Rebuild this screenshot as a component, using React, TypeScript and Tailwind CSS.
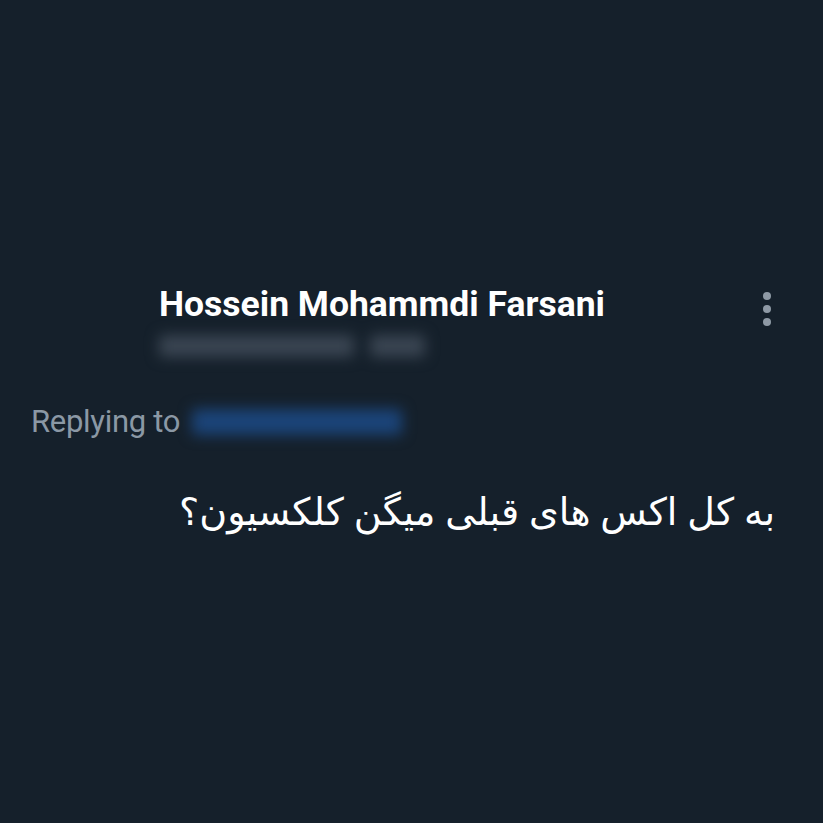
import React from 'react'

const App = () => {
  return (
    <div className="w-[823px] h-[823px] bg-[#15202b] overflow-hidden font-['Roboto','Liberation_Sans',sans-serif]">
      <div className="pt-[283px] flex">
        <div className="pl-[159px] flex-1 flex flex-col">
          <div className="text-[35.5px] leading-[42px] font-bold text-white">
            Hossein Mohammdi Farsani
          </div>
          <div className="mt-[10px] flex gap-4 blur-[7px]">
            <div className="h-[22px] w-[195px] rounded bg-[#3a4552]" />
            <div className="h-[22px] w-[55px] rounded bg-[#3a4552]" />
          </div>
        </div>
        <div className="pr-[52px] pt-[9px] flex flex-col gap-[5px]">
          <span className="w-[8px] h-[8px] rounded-full bg-[#8e99a5]" />
          <span className="w-[8px] h-[8px] rounded-full bg-[#8e99a5]" />
          <span className="w-[8px] h-[8px] rounded-full bg-[#8e99a5]" />
        </div>
      </div>

      <div className="mt-[45px] pl-[31px] flex items-center">
        <span className="text-[31px] leading-[40px] text-[#8b98a5] tracking-[-0.3px]">Replying to</span>
        <div className="ml-[12px] h-[26px] w-[210px] rounded bg-[#1b4479] blur-[7px]" />
      </div>

      <div
        dir="rtl"
        className="mt-[40px] pr-[48px] text-[38px] leading-[56px] text-white font-['Noto_Sans','DejaVu_Sans',sans-serif]"
      >
        به کل اکس های قبلی میگن کلکسیون؟
      </div>
    </div>
  )
}

export default App
